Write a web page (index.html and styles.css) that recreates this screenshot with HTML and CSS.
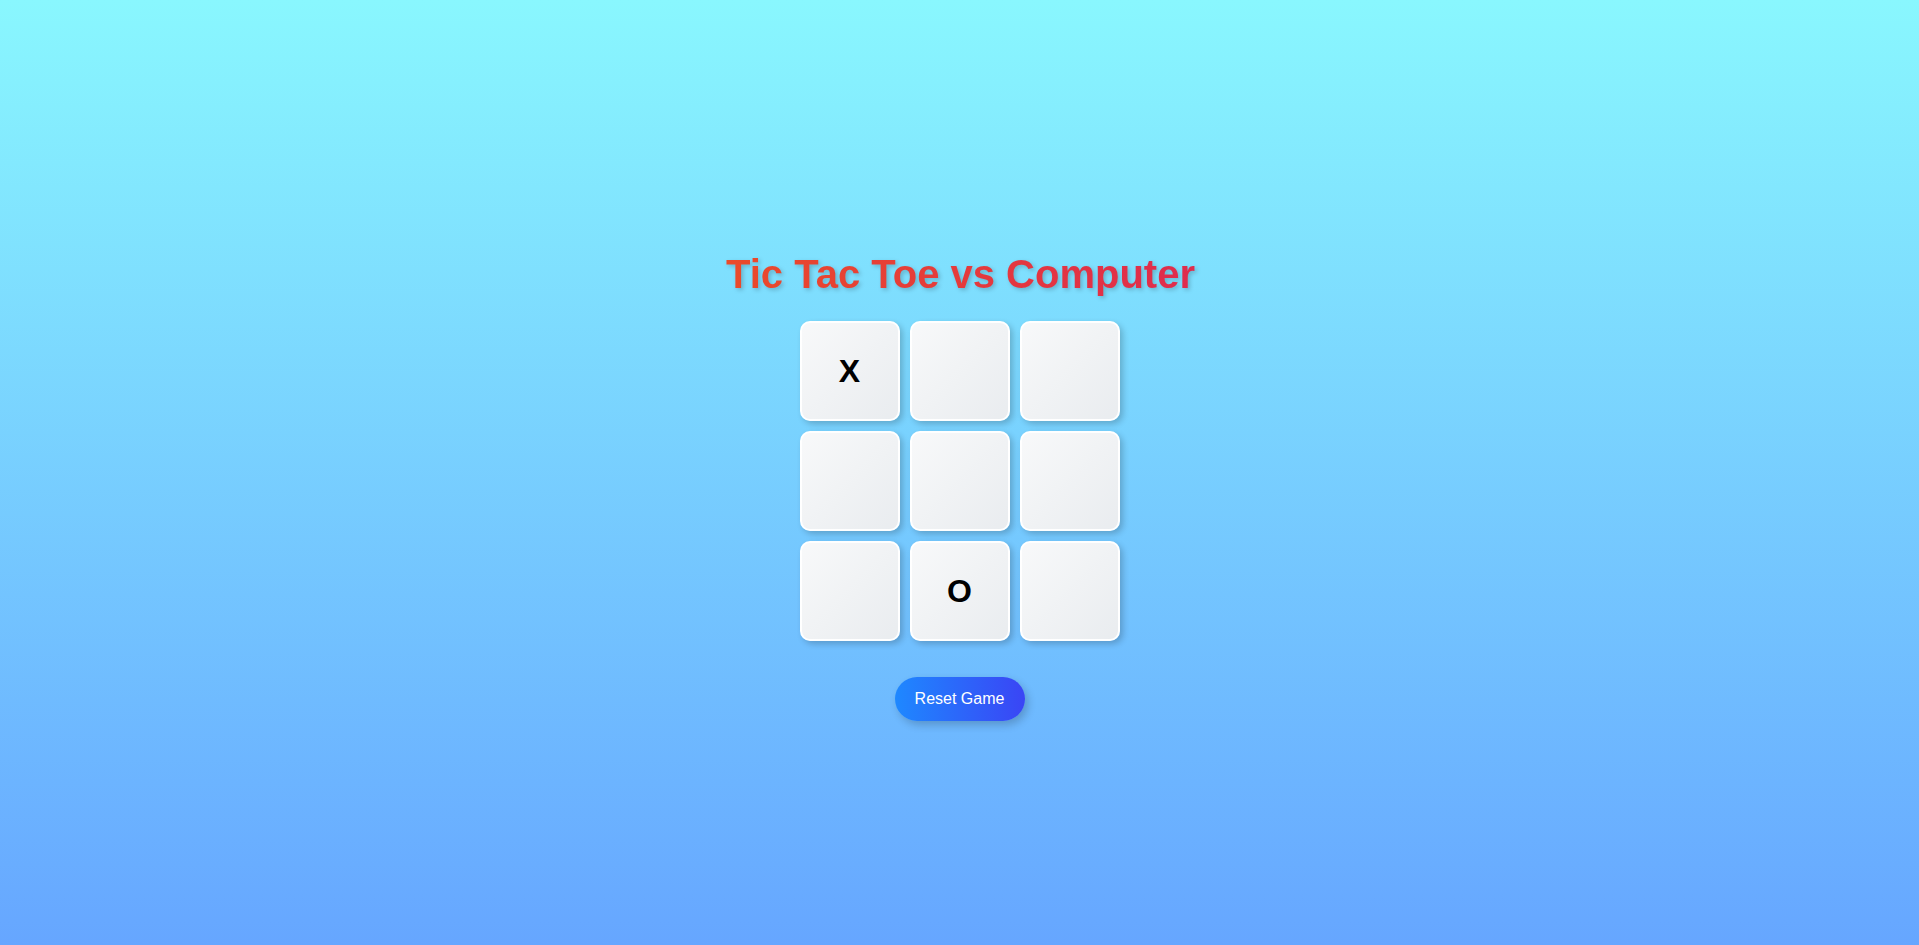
FILE: index.html
```html
<!DOCTYPE html>
<html lang="en">
<head>
<meta charset="utf-8">
<title>Tic Tac Toe vs Computer</title>
<link rel="stylesheet" href="styles.css">
</head>
<body>
  <main class="game">
    <h1 class="title">Tic Tac Toe vs Computer</h1>
    <div class="board">
      <div class="cell">X</div>
      <div class="cell"></div>
      <div class="cell"></div>
      <div class="cell"></div>
      <div class="cell"></div>
      <div class="cell"></div>
      <div class="cell"></div>
      <div class="cell">O</div>
      <div class="cell"></div>
    </div>
    <button class="reset">Reset Game</button>
  </main>
</body>
</html>
```
FILE: styles.css
```css
* { box-sizing: border-box; }
html, body { height: 100%; }
body {
  margin: 0;
  background: linear-gradient(to bottom, #89f7fe 0%, #66a6ff 100%);
  font-family: "Liberation Sans", Arial, sans-serif;
}
.game {
  min-height: 100vh;
  display: flex;
  flex-direction: column;
  align-items: center;
  justify-content: center;
  padding-top: 26px;
}
.title {
  margin: 1px 0 24px 2px;
  font-size: 40px;
  font-weight: bold;
  background: linear-gradient(to right, #ea4a2a, #df2b4d);
  -webkit-background-clip: text;
  background-clip: text;
  color: transparent;
  filter: drop-shadow(2px 2px 2px rgba(0,0,0,0.2));
}
.board {
  display: grid;
  grid-template-columns: repeat(3, 100px);
  grid-template-rows: repeat(3, 100px);
  gap: 10px;
}
.cell {
  display: flex;
  align-items: center;
  justify-content: center;
  padding-top: 2px;
  border: 2px solid #fff;
  border-radius: 10px;
  background: linear-gradient(135deg, #f8f9fa, #e9ecef);
  box-shadow: 3px 3px 6px rgba(0,0,0,0.2);
  font-size: 32px;
  font-weight: bold;
  color: #000;
}
.reset {
  margin-top: 36px;
  width: 130px;
  height: 44px;
  border: none;
  border-radius: 22px;
  background: linear-gradient(to right, #1e88ff, #3a45f5);
  color: #fff;
  font-family: "Liberation Sans", Arial, sans-serif;
  font-size: 16px;
  box-shadow: 3px 4px 8px rgba(0,0,0,0.2);
  cursor: pointer;
}
```
